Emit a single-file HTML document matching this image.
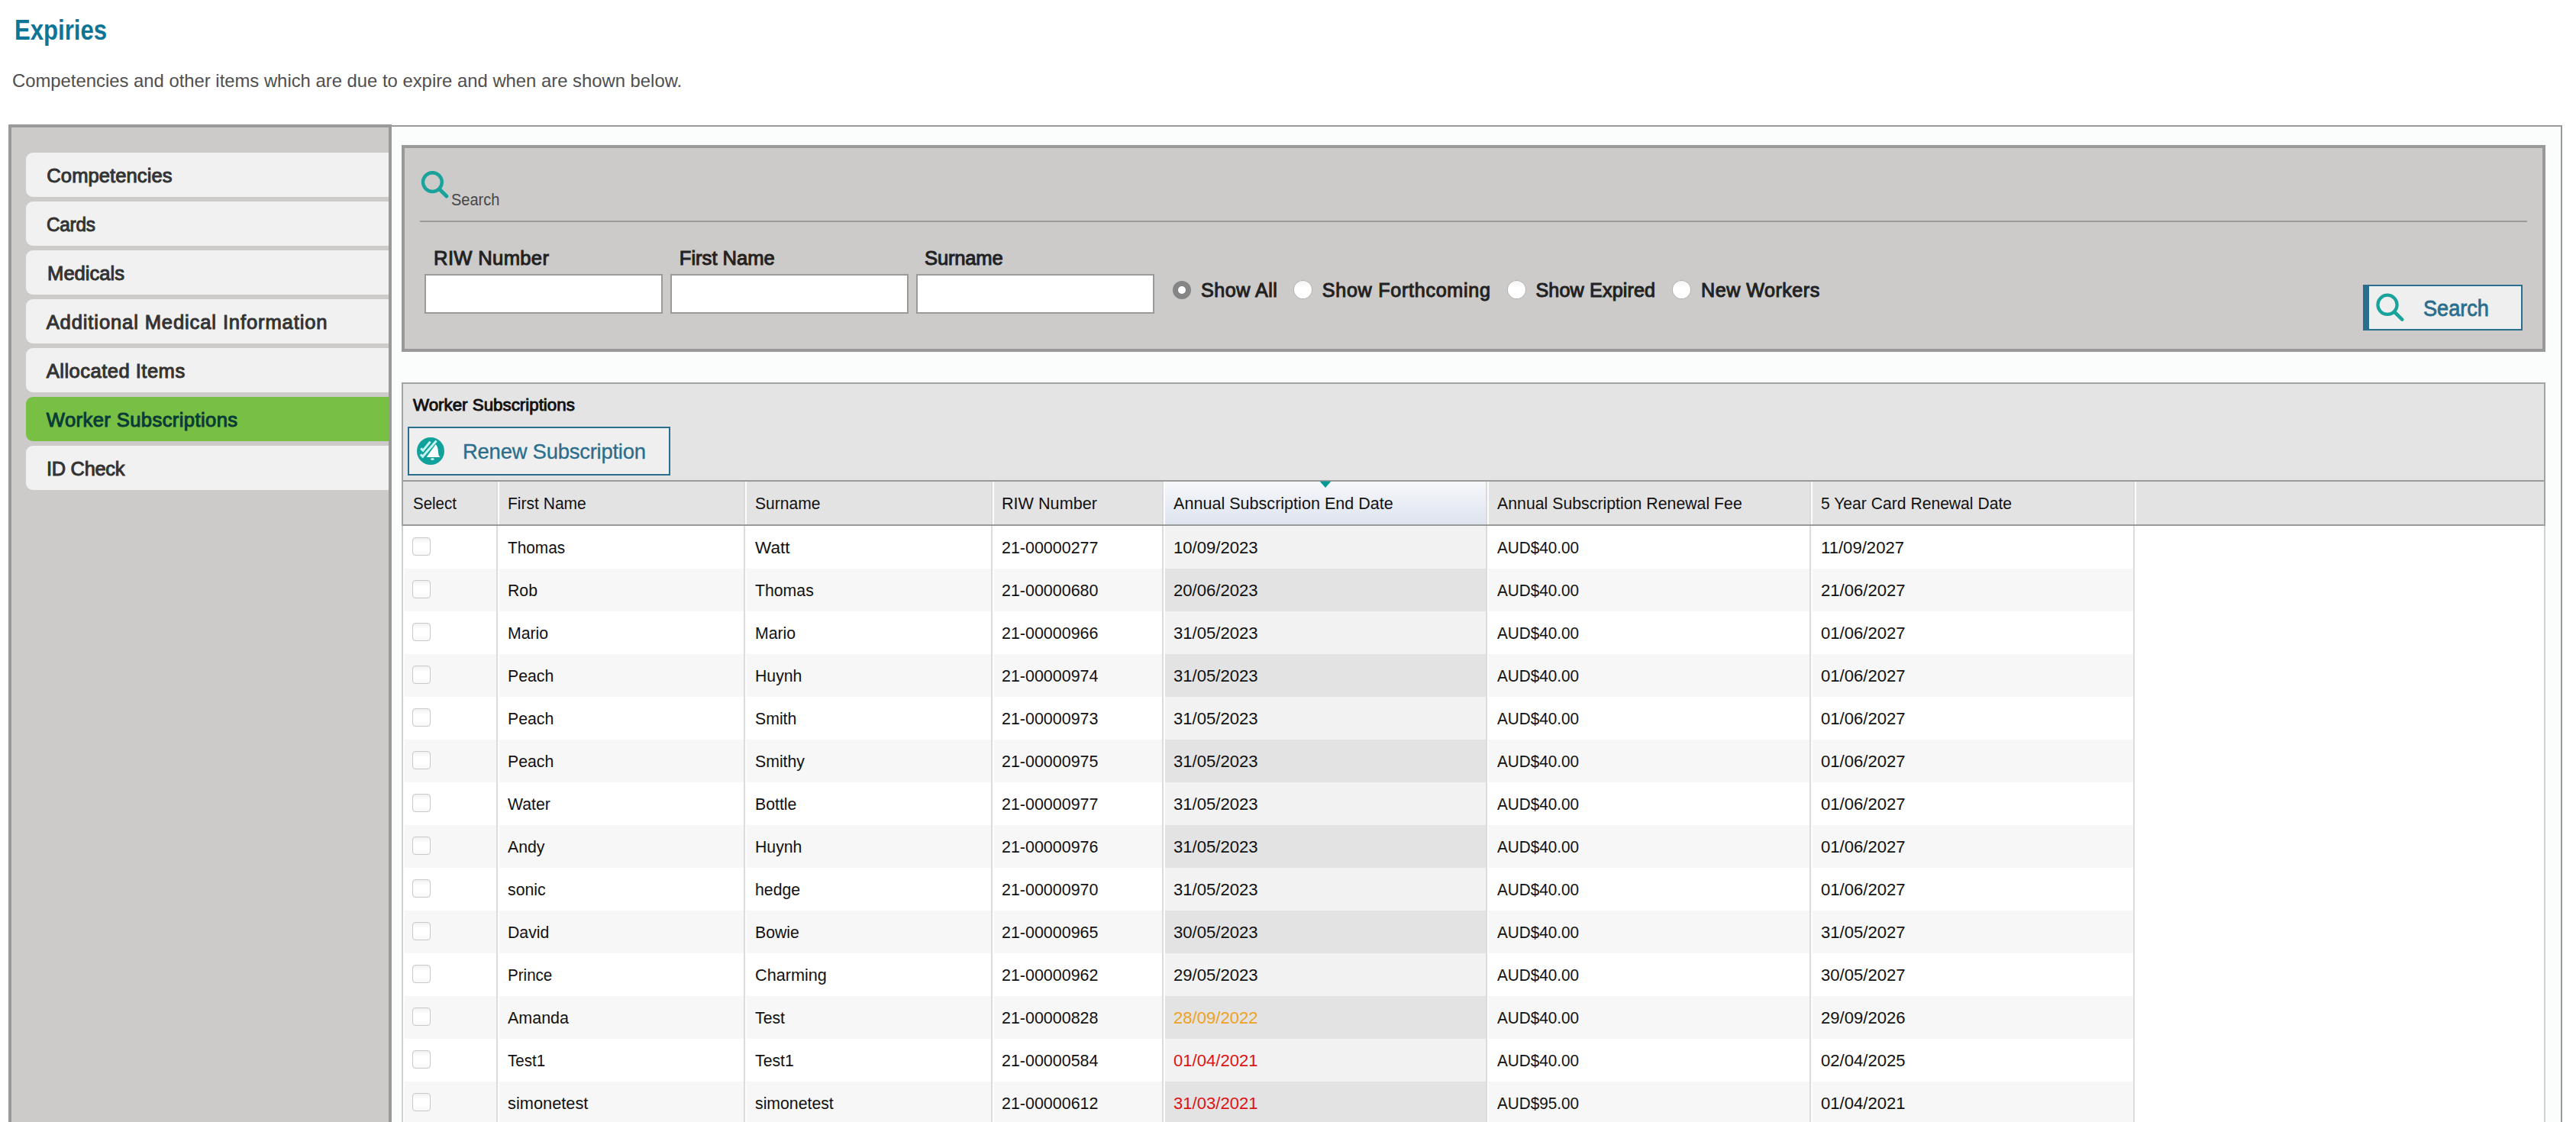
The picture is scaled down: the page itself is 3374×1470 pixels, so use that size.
<!DOCTYPE html>
<html><head><meta charset="utf-8"><title>Expiries</title>
<style>
html,body{margin:0;padding:0;}
body{width:3374px;height:1470px;overflow:hidden;position:relative;background:#fff;font-family:"Liberation Sans",sans-serif;}
.t{position:absolute;line-height:1;white-space:nowrap;}
.r{position:absolute;}
</style></head><body>
<div class="t" style="left:18.90px;top:22.22px;font-size:36px;color:#0f7597;font-weight:700;transform:scaleX(0.8648);transform-origin:0 0;">Expiries</div>
<div class="t" style="left:16.40px;top:94.82px;font-size:23.6px;color:#4f4f4f;font-weight:400;transform:scaleX(1.0103);transform-origin:0 0;">Competencies and other items which are due to expire and when are shown below.</div>
<div class="r" style="left:11px;top:163px;width:502px;height:1307px;background:#999;"></div>
<div class="r" style="left:15px;top:167px;width:494px;height:1303px;background:#cccbca;"></div>
<div class="r" style="left:34px;top:200px;width:475px;height:58px;background:#f1f1f1;border-radius:9px 0 0 9px;"></div>
<div class="t" style="left:61.30px;top:218.32px;font-size:25.6px;color:#333;font-weight:400;-webkit-text-stroke:1.0px #333;letter-spacing:0.056px;">Competencies</div>
<div class="r" style="left:34px;top:264px;width:475px;height:58px;background:#f1f1f1;border-radius:9px 0 0 9px;"></div>
<div class="t" style="left:61.20px;top:282.32px;font-size:25.6px;color:#333;font-weight:400;transform:scaleX(0.9502);transform-origin:0 0;-webkit-text-stroke:1.0px #333;letter-spacing:-0.250px;">Cards</div>
<div class="r" style="left:34px;top:328px;width:475px;height:58px;background:#f1f1f1;border-radius:9px 0 0 9px;"></div>
<div class="t" style="left:62.10px;top:346.32px;font-size:25.6px;color:#333;font-weight:400;-webkit-text-stroke:1.0px #333;letter-spacing:-0.013px;">Medicals</div>
<div class="r" style="left:34px;top:392px;width:475px;height:58px;background:#f1f1f1;border-radius:9px 0 0 9px;"></div>
<div class="t" style="left:60.70px;top:410.32px;font-size:25.6px;color:#333;font-weight:400;-webkit-text-stroke:1.0px #333;letter-spacing:0.862px;">Additional Medical Information</div>
<div class="r" style="left:34px;top:456px;width:475px;height:58px;background:#f1f1f1;border-radius:9px 0 0 9px;"></div>
<div class="t" style="left:60.80px;top:474.32px;font-size:25.6px;color:#333;font-weight:400;-webkit-text-stroke:1.0px #333;letter-spacing:0.459px;">Allocated Items</div>
<div class="r" style="left:34px;top:520px;width:475px;height:58px;background:#78c043;border-radius:9px 0 0 9px;"></div>
<div class="t" style="left:60.80px;top:538.32px;font-size:25.6px;color:#0a3b37;font-weight:400;-webkit-text-stroke:1.0px #0a3b37;letter-spacing:0.399px;">Worker Subscriptions</div>
<div class="r" style="left:34px;top:584px;width:475px;height:58px;background:#f1f1f1;border-radius:9px 0 0 9px;"></div>
<div class="t" style="left:60.60px;top:602.32px;font-size:25.6px;color:#333;font-weight:400;transform:scaleX(0.9894);transform-origin:0 0;-webkit-text-stroke:1.0px #333;letter-spacing:-0.250px;">ID Check</div>
<div class="r" style="left:513px;top:164px;width:2843px;height:1306px;background:#999;"></div>
<div class="r" style="left:513px;top:166px;width:2841px;height:1304px;background:#fbfcfc;"></div>
<div class="r" style="left:526px;top:190px;width:2808px;height:271px;background:#999;"></div>
<div class="r" style="left:530px;top:194px;width:2800px;height:263px;background:#cccbca;"></div>
<svg class="r" style="left:548px;top:220px" width="44" height="44" viewBox="0 0 44 44">
<circle cx="18.4" cy="18.6" r="12.4" fill="none" stroke="#19a39b" stroke-width="4.4"/>
<line x1="27.5" y1="27.8" x2="36.8" y2="37" stroke="#19a39b" stroke-width="5" stroke-linecap="round"/>
</svg>
<div class="t" style="left:590.50px;top:250.90px;font-size:22.2px;color:#474747;font-weight:400;transform:scaleX(0.9023);transform-origin:0 0;">Search</div>
<div class="r" style="left:550px;top:289px;width:2760px;height:2px;background:#9b9b9b;"></div>
<div class="t" style="left:568.10px;top:326.32px;font-size:25.6px;color:#222;font-weight:400;-webkit-text-stroke:1.0px #222;letter-spacing:0.326px;">RIW Number</div>
<div class="r" style="left:556px;top:359px;width:312px;height:52px;background:#9a9a9a;"></div>
<div class="r" style="left:558px;top:361px;width:308px;height:48px;background:#fff;"></div>
<div class="t" style="left:889.80px;top:326.32px;font-size:25.6px;color:#222;font-weight:400;-webkit-text-stroke:1.0px #222;letter-spacing:-0.009px;">First Name</div>
<div class="r" style="left:878px;top:359px;width:312px;height:52px;background:#9a9a9a;"></div>
<div class="r" style="left:880px;top:361px;width:308px;height:48px;background:#fff;"></div>
<div class="t" style="left:1211.00px;top:326.32px;font-size:25.6px;color:#222;font-weight:400;-webkit-text-stroke:1.0px #222;letter-spacing:-0.189px;">Surname</div>
<div class="r" style="left:1200px;top:359px;width:312px;height:52px;background:#9a9a9a;"></div>
<div class="r" style="left:1202px;top:361px;width:308px;height:48px;background:#fff;"></div>
<div class="r" style="left:1536px;top:368px;width:24px;height:24px;border-radius:50%;background:#858585;"></div>
<div class="r" style="left:1543px;top:375px;width:10px;height:10px;border-radius:50%;background:#fff;"></div>
<div class="t" style="left:1572.90px;top:367.66px;font-size:25.2px;color:#222;font-weight:400;-webkit-text-stroke:1.0px #222;letter-spacing:0.480px;">Show All</div>
<div class="r" style="left:1695px;top:368px;width:23px;height:23px;border-radius:50%;background:linear-gradient(#f4f4f4,#ffffff 40%);box-shadow:0 0 0 0.8px rgba(0,0,0,0.14);"></div>
<div class="t" style="left:1731.70px;top:367.66px;font-size:25.2px;color:#222;font-weight:400;-webkit-text-stroke:1.0px #222;letter-spacing:0.691px;">Show Forthcoming</div>
<div class="r" style="left:1975px;top:368px;width:23px;height:23px;border-radius:50%;background:linear-gradient(#f4f4f4,#ffffff 40%);box-shadow:0 0 0 0.8px rgba(0,0,0,0.14);"></div>
<div class="t" style="left:2011.40px;top:367.66px;font-size:25.2px;color:#222;font-weight:400;-webkit-text-stroke:1.0px #222;letter-spacing:0.120px;">Show Expired</div>
<div class="r" style="left:2191px;top:368px;width:23px;height:23px;border-radius:50%;background:linear-gradient(#f4f4f4,#ffffff 40%);box-shadow:0 0 0 0.8px rgba(0,0,0,0.14);"></div>
<div class="t" style="left:2228.10px;top:367.66px;font-size:25.2px;color:#222;font-weight:400;-webkit-text-stroke:1.0px #222;letter-spacing:0.448px;">New Workers</div>
<div class="r" style="left:3095px;top:373px;width:209px;height:60px;background:#2a6d8c;"></div>
<div class="r" style="left:3103px;top:375px;width:199px;height:56px;background:#e6f4f8;"></div>
<div class="r" style="left:3104px;top:376px;width:197px;height:54px;background:#efefef;"></div>
<svg class="r" style="left:3108px;top:380px" width="44" height="44" viewBox="0 0 44 44">
<circle cx="19" cy="19.3" r="12.6" fill="none" stroke="#19a39b" stroke-width="4.2"/>
<line x1="28" y1="28.5" x2="38.3" y2="38.6" stroke="#19a39b" stroke-width="4.6" stroke-linecap="round"/>
</svg>
<div class="t" style="left:3173.60px;top:389.22px;font-size:29.5px;color:#2a6d8c;font-weight:400;transform:scaleX(0.9196);transform-origin:0 0;-webkit-text-stroke:0.8px #2a6d8c;">Search</div>
<div class="r" style="left:526px;top:501px;width:2808px;height:969px;background:#a3a3a3;"></div>
<div class="r" style="left:528px;top:503px;width:2804px;height:967px;background:#e4e4e4;"></div>
<div class="t" style="left:540.75px;top:521.40px;font-size:21.5px;color:#111;font-weight:400;transform:scaleX(1.0386);transform-origin:0 0;-webkit-text-stroke:0.9px #111;">Worker Subscriptions</div>
<div class="r" style="left:534px;top:559px;width:344px;height:64px;background:#2a6d8c;"></div>
<div class="r" style="left:536px;top:561px;width:340px;height:60px;background:#efefef;"></div>
<svg class="r" style="left:546px;top:573px" width="36" height="36" viewBox="0 0 36 36">
<circle cx="18" cy="18" r="18" fill="#10a19b"/>
<polyline points="5.2,14.4 8,17.2 17.6,5.6" fill="none" stroke="#c4f2f2" stroke-width="3"/>
<polyline points="4.8,22.2 7.6,25.2 25.6,4.4" fill="none" stroke="#c4f2f2" stroke-width="3"/>
<path d="M24.6,9.2 C27.4,11.8 27.8,16 28,19.5 C28.2,22.6 29,24.6 30.4,26 L12.6,26 Z" fill="#ffffff"/>
<ellipse cx="20.4" cy="28.6" rx="2.4" ry="1.5" fill="#c4f2f2"/>
</svg>
<div class="t" style="left:605.75px;top:578.33px;font-size:27.6px;color:#2a6d8c;font-weight:400;transform:scaleX(0.9952);transform-origin:0 0;-webkit-text-stroke:0.3px #2a6d8c;letter-spacing:-0.250px;">Renew Subscription</div>
<div class="r" style="left:528px;top:629px;width:2804px;height:2px;background:#9a9a9a;"></div>
<div class="r" style="left:528px;top:631px;width:2804px;height:56px;background:#e3e3e3;"></div>
<div class="r" style="left:528px;top:687px;width:2804px;height:2px;background:#9a9a9a;"></div>
<div class="r" style="left:1524px;top:631px;width:422px;height:56px;background:linear-gradient(#f7f8fb,#dde3ef);"></div>
<div class="r" style="left:650px;top:631px;width:2px;height:56px;background:#dadada;"></div>
<div class="r" style="left:652px;top:631px;width:2px;height:56px;background:#fcfcfc;"></div>
<div class="r" style="left:974px;top:631px;width:2px;height:56px;background:#dadada;"></div>
<div class="r" style="left:976px;top:631px;width:2px;height:56px;background:#fcfcfc;"></div>
<div class="r" style="left:1298px;top:631px;width:2px;height:56px;background:#dadada;"></div>
<div class="r" style="left:1300px;top:631px;width:2px;height:56px;background:#fcfcfc;"></div>
<div class="r" style="left:1522px;top:631px;width:2px;height:56px;background:#dadada;"></div>
<div class="r" style="left:1524px;top:631px;width:2px;height:56px;background:#fcfcfc;"></div>
<div class="r" style="left:1946px;top:631px;width:2px;height:56px;background:#dadada;"></div>
<div class="r" style="left:1948px;top:631px;width:2px;height:56px;background:#fcfcfc;"></div>
<div class="r" style="left:2370px;top:631px;width:2px;height:56px;background:#dadada;"></div>
<div class="r" style="left:2372px;top:631px;width:2px;height:56px;background:#fcfcfc;"></div>
<div class="r" style="left:2794px;top:631px;width:2px;height:56px;background:#dadada;"></div>
<div class="r" style="left:2796px;top:631px;width:2px;height:56px;background:#fcfcfc;"></div>
<svg class="r" style="left:1728px;top:630px" width="16" height="10" viewBox="0 0 16 10"><polygon points="0.5,0.5 15.5,0.5 8,9" fill="#079a94"/></svg>
<div class="t" style="left:540.60px;top:649.37px;font-size:22px;color:#111;font-weight:400;transform:scaleX(0.9303);transform-origin:0 0;">Select</div>
<div class="t" style="left:665.40px;top:649.37px;font-size:22px;color:#111;font-weight:400;transform:scaleX(0.9556);transform-origin:0 0;">First Name</div>
<div class="t" style="left:988.50px;top:649.37px;font-size:22px;color:#111;font-weight:400;transform:scaleX(0.9572);transform-origin:0 0;">Surname</div>
<div class="t" style="left:1312.40px;top:649.37px;font-size:22px;color:#111;font-weight:400;transform:scaleX(0.9822);transform-origin:0 0;">RIW Number</div>
<div class="t" style="left:1536.50px;top:649.37px;font-size:22px;color:#111;font-weight:400;transform:scaleX(0.9806);transform-origin:0 0;">Annual Subscription End Date</div>
<div class="t" style="left:1960.60px;top:649.37px;font-size:22px;color:#111;font-weight:400;transform:scaleX(0.9679);transform-origin:0 0;">Annual Subscription Renewal Fee</div>
<div class="t" style="left:2384.50px;top:649.37px;font-size:22px;color:#111;font-weight:400;transform:scaleX(0.9598);transform-origin:0 0;">5 Year Card Renewal Date</div>
<div class="r" style="left:528px;top:689px;width:2804px;height:781px;background:#ffffff;"></div>
<div class="r" style="left:526px;top:689px;width:2px;height:781px;background:#cfcfcf;"></div>
<div class="r" style="left:3332px;top:689px;width:2px;height:781px;background:#d2d2d2;"></div>
<div class="r" style="left:1524px;top:689px;width:422px;height:56px;background:#f2f2f2;"></div>
<div class="r" style="left:530px;top:745px;width:2264px;height:56px;background:#f7f7f7;"></div>
<div class="r" style="left:1524px;top:745px;width:422px;height:56px;background:#e3e3e3;"></div>
<div class="r" style="left:1524px;top:801px;width:422px;height:56px;background:#f2f2f2;"></div>
<div class="r" style="left:530px;top:857px;width:2264px;height:56px;background:#f7f7f7;"></div>
<div class="r" style="left:1524px;top:857px;width:422px;height:56px;background:#e3e3e3;"></div>
<div class="r" style="left:1524px;top:913px;width:422px;height:56px;background:#f2f2f2;"></div>
<div class="r" style="left:530px;top:969px;width:2264px;height:56px;background:#f7f7f7;"></div>
<div class="r" style="left:1524px;top:969px;width:422px;height:56px;background:#e3e3e3;"></div>
<div class="r" style="left:1524px;top:1025px;width:422px;height:56px;background:#f2f2f2;"></div>
<div class="r" style="left:530px;top:1081px;width:2264px;height:56px;background:#f7f7f7;"></div>
<div class="r" style="left:1524px;top:1081px;width:422px;height:56px;background:#e3e3e3;"></div>
<div class="r" style="left:1524px;top:1137px;width:422px;height:56px;background:#f2f2f2;"></div>
<div class="r" style="left:530px;top:1193px;width:2264px;height:56px;background:#f7f7f7;"></div>
<div class="r" style="left:1524px;top:1193px;width:422px;height:56px;background:#e3e3e3;"></div>
<div class="r" style="left:1524px;top:1249px;width:422px;height:56px;background:#f2f2f2;"></div>
<div class="r" style="left:530px;top:1305px;width:2264px;height:56px;background:#f7f7f7;"></div>
<div class="r" style="left:1524px;top:1305px;width:422px;height:56px;background:#e3e3e3;"></div>
<div class="r" style="left:1524px;top:1361px;width:422px;height:56px;background:#f2f2f2;"></div>
<div class="r" style="left:530px;top:1417px;width:2264px;height:56px;background:#f7f7f7;"></div>
<div class="r" style="left:1524px;top:1417px;width:422px;height:56px;background:#e3e3e3;"></div>
<div class="r" style="left:650px;top:689px;width:2px;height:781px;background:#dcdcdc;"></div>
<div class="r" style="left:652px;top:689px;width:2px;height:781px;background:#fdfdfd;"></div>
<div class="r" style="left:974px;top:689px;width:2px;height:781px;background:#dcdcdc;"></div>
<div class="r" style="left:976px;top:689px;width:2px;height:781px;background:#fdfdfd;"></div>
<div class="r" style="left:1298px;top:689px;width:2px;height:781px;background:#dcdcdc;"></div>
<div class="r" style="left:1300px;top:689px;width:2px;height:781px;background:#fdfdfd;"></div>
<div class="r" style="left:1522px;top:689px;width:2px;height:781px;background:#dcdcdc;"></div>
<div class="r" style="left:1524px;top:689px;width:2px;height:781px;background:#fdfdfd;"></div>
<div class="r" style="left:1946px;top:689px;width:2px;height:781px;background:#dcdcdc;"></div>
<div class="r" style="left:1948px;top:689px;width:2px;height:781px;background:#fdfdfd;"></div>
<div class="r" style="left:2370px;top:689px;width:2px;height:781px;background:#dcdcdc;"></div>
<div class="r" style="left:2372px;top:689px;width:2px;height:781px;background:#fdfdfd;"></div>
<div class="r" style="left:2794px;top:689px;width:2px;height:781px;background:#dcdcdc;"></div>
<div class="r" style="left:2796px;top:689px;width:2px;height:781px;background:#fdfdfd;"></div>
<div class="r" style="left:540px;top:704px;width:22px;height:22px;border:1px solid #c9c9c9;border-radius:4px;background:linear-gradient(#f1f1f1,#ffffff 35%,#ffffff 70%,#f6f6f6);"></div>
<div class="t" style="left:664.60px;top:707.37px;font-size:22px;color:#111;font-weight:400;transform:scaleX(0.9456);transform-origin:0 0;">Thomas</div>
<div class="t" style="left:988.50px;top:707.37px;font-size:22px;color:#111;font-weight:400;transform:scaleX(1.0239);transform-origin:0 0;">Watt</div>
<div class="t" style="left:1312.40px;top:707.37px;font-size:22px;color:#111;font-weight:400;transform:scaleX(0.9750);transform-origin:0 0;">21-00000277</div>
<div class="t" style="left:1536.90px;top:707.37px;font-size:22px;color:#111;font-weight:400;transform:scaleX(1.0050);transform-origin:0 0;">10/09/2023</div>
<div class="t" style="left:1960.60px;top:707.37px;font-size:22px;color:#111;font-weight:400;transform:scaleX(0.9420);transform-origin:0 0;">AUD$40.00</div>
<div class="t" style="left:2384.50px;top:707.37px;font-size:22px;color:#111;font-weight:400;transform:scaleX(1.0050);transform-origin:0 0;">11/09/2027</div>
<div class="r" style="left:540px;top:760px;width:22px;height:22px;border:1px solid #c9c9c9;border-radius:4px;background:linear-gradient(#f1f1f1,#ffffff 35%,#ffffff 70%,#f6f6f6);"></div>
<div class="t" style="left:664.60px;top:763.37px;font-size:22px;color:#111;font-weight:400;transform:scaleX(0.9660);transform-origin:0 0;">Rob</div>
<div class="t" style="left:988.50px;top:763.37px;font-size:22px;color:#111;font-weight:400;transform:scaleX(0.9660);transform-origin:0 0;">Thomas</div>
<div class="t" style="left:1312.40px;top:763.37px;font-size:22px;color:#111;font-weight:400;transform:scaleX(0.9750);transform-origin:0 0;">21-00000680</div>
<div class="t" style="left:1536.90px;top:763.37px;font-size:22px;color:#111;font-weight:400;transform:scaleX(1.0050);transform-origin:0 0;">20/06/2023</div>
<div class="t" style="left:1960.60px;top:763.37px;font-size:22px;color:#111;font-weight:400;transform:scaleX(0.9420);transform-origin:0 0;">AUD$40.00</div>
<div class="t" style="left:2384.50px;top:763.37px;font-size:22px;color:#111;font-weight:400;transform:scaleX(1.0050);transform-origin:0 0;">21/06/2027</div>
<div class="r" style="left:540px;top:816px;width:22px;height:22px;border:1px solid #c9c9c9;border-radius:4px;background:linear-gradient(#f1f1f1,#ffffff 35%,#ffffff 70%,#f6f6f6);"></div>
<div class="t" style="left:664.60px;top:819.37px;font-size:22px;color:#111;font-weight:400;transform:scaleX(0.9660);transform-origin:0 0;">Mario</div>
<div class="t" style="left:988.50px;top:819.37px;font-size:22px;color:#111;font-weight:400;transform:scaleX(0.9660);transform-origin:0 0;">Mario</div>
<div class="t" style="left:1312.40px;top:819.37px;font-size:22px;color:#111;font-weight:400;transform:scaleX(0.9750);transform-origin:0 0;">21-00000966</div>
<div class="t" style="left:1536.90px;top:819.37px;font-size:22px;color:#111;font-weight:400;transform:scaleX(1.0050);transform-origin:0 0;">31/05/2023</div>
<div class="t" style="left:1960.60px;top:819.37px;font-size:22px;color:#111;font-weight:400;transform:scaleX(0.9420);transform-origin:0 0;">AUD$40.00</div>
<div class="t" style="left:2384.50px;top:819.37px;font-size:22px;color:#111;font-weight:400;transform:scaleX(1.0050);transform-origin:0 0;">01/06/2027</div>
<div class="r" style="left:540px;top:872px;width:22px;height:22px;border:1px solid #c9c9c9;border-radius:4px;background:linear-gradient(#f1f1f1,#ffffff 35%,#ffffff 70%,#f6f6f6);"></div>
<div class="t" style="left:664.60px;top:875.37px;font-size:22px;color:#111;font-weight:400;transform:scaleX(0.9660);transform-origin:0 0;">Peach</div>
<div class="t" style="left:988.50px;top:875.37px;font-size:22px;color:#111;font-weight:400;transform:scaleX(0.9660);transform-origin:0 0;">Huynh</div>
<div class="t" style="left:1312.40px;top:875.37px;font-size:22px;color:#111;font-weight:400;transform:scaleX(0.9750);transform-origin:0 0;">21-00000974</div>
<div class="t" style="left:1536.90px;top:875.37px;font-size:22px;color:#111;font-weight:400;transform:scaleX(1.0050);transform-origin:0 0;">31/05/2023</div>
<div class="t" style="left:1960.60px;top:875.37px;font-size:22px;color:#111;font-weight:400;transform:scaleX(0.9420);transform-origin:0 0;">AUD$40.00</div>
<div class="t" style="left:2384.50px;top:875.37px;font-size:22px;color:#111;font-weight:400;transform:scaleX(1.0050);transform-origin:0 0;">01/06/2027</div>
<div class="r" style="left:540px;top:928px;width:22px;height:22px;border:1px solid #c9c9c9;border-radius:4px;background:linear-gradient(#f1f1f1,#ffffff 35%,#ffffff 70%,#f6f6f6);"></div>
<div class="t" style="left:664.60px;top:931.37px;font-size:22px;color:#111;font-weight:400;transform:scaleX(0.9660);transform-origin:0 0;">Peach</div>
<div class="t" style="left:988.50px;top:931.37px;font-size:22px;color:#111;font-weight:400;transform:scaleX(0.9660);transform-origin:0 0;">Smith</div>
<div class="t" style="left:1312.40px;top:931.37px;font-size:22px;color:#111;font-weight:400;transform:scaleX(0.9750);transform-origin:0 0;">21-00000973</div>
<div class="t" style="left:1536.90px;top:931.37px;font-size:22px;color:#111;font-weight:400;transform:scaleX(1.0050);transform-origin:0 0;">31/05/2023</div>
<div class="t" style="left:1960.60px;top:931.37px;font-size:22px;color:#111;font-weight:400;transform:scaleX(0.9420);transform-origin:0 0;">AUD$40.00</div>
<div class="t" style="left:2384.50px;top:931.37px;font-size:22px;color:#111;font-weight:400;transform:scaleX(1.0050);transform-origin:0 0;">01/06/2027</div>
<div class="r" style="left:540px;top:984px;width:22px;height:22px;border:1px solid #c9c9c9;border-radius:4px;background:linear-gradient(#f1f1f1,#ffffff 35%,#ffffff 70%,#f6f6f6);"></div>
<div class="t" style="left:664.60px;top:987.37px;font-size:22px;color:#111;font-weight:400;transform:scaleX(0.9660);transform-origin:0 0;">Peach</div>
<div class="t" style="left:988.50px;top:987.37px;font-size:22px;color:#111;font-weight:400;transform:scaleX(0.9660);transform-origin:0 0;">Smithy</div>
<div class="t" style="left:1312.40px;top:987.37px;font-size:22px;color:#111;font-weight:400;transform:scaleX(0.9750);transform-origin:0 0;">21-00000975</div>
<div class="t" style="left:1536.90px;top:987.37px;font-size:22px;color:#111;font-weight:400;transform:scaleX(1.0050);transform-origin:0 0;">31/05/2023</div>
<div class="t" style="left:1960.60px;top:987.37px;font-size:22px;color:#111;font-weight:400;transform:scaleX(0.9420);transform-origin:0 0;">AUD$40.00</div>
<div class="t" style="left:2384.50px;top:987.37px;font-size:22px;color:#111;font-weight:400;transform:scaleX(1.0050);transform-origin:0 0;">01/06/2027</div>
<div class="r" style="left:540px;top:1040px;width:22px;height:22px;border:1px solid #c9c9c9;border-radius:4px;background:linear-gradient(#f1f1f1,#ffffff 35%,#ffffff 70%,#f6f6f6);"></div>
<div class="t" style="left:664.60px;top:1043.37px;font-size:22px;color:#111;font-weight:400;transform:scaleX(0.9660);transform-origin:0 0;">Water</div>
<div class="t" style="left:988.50px;top:1043.37px;font-size:22px;color:#111;font-weight:400;transform:scaleX(0.9660);transform-origin:0 0;">Bottle</div>
<div class="t" style="left:1312.40px;top:1043.37px;font-size:22px;color:#111;font-weight:400;transform:scaleX(0.9750);transform-origin:0 0;">21-00000977</div>
<div class="t" style="left:1536.90px;top:1043.37px;font-size:22px;color:#111;font-weight:400;transform:scaleX(1.0050);transform-origin:0 0;">31/05/2023</div>
<div class="t" style="left:1960.60px;top:1043.37px;font-size:22px;color:#111;font-weight:400;transform:scaleX(0.9420);transform-origin:0 0;">AUD$40.00</div>
<div class="t" style="left:2384.50px;top:1043.37px;font-size:22px;color:#111;font-weight:400;transform:scaleX(1.0050);transform-origin:0 0;">01/06/2027</div>
<div class="r" style="left:540px;top:1096px;width:22px;height:22px;border:1px solid #c9c9c9;border-radius:4px;background:linear-gradient(#f1f1f1,#ffffff 35%,#ffffff 70%,#f6f6f6);"></div>
<div class="t" style="left:664.60px;top:1099.37px;font-size:22px;color:#111;font-weight:400;transform:scaleX(0.9660);transform-origin:0 0;">Andy</div>
<div class="t" style="left:988.50px;top:1099.37px;font-size:22px;color:#111;font-weight:400;transform:scaleX(0.9660);transform-origin:0 0;">Huynh</div>
<div class="t" style="left:1312.40px;top:1099.37px;font-size:22px;color:#111;font-weight:400;transform:scaleX(0.9750);transform-origin:0 0;">21-00000976</div>
<div class="t" style="left:1536.90px;top:1099.37px;font-size:22px;color:#111;font-weight:400;transform:scaleX(1.0050);transform-origin:0 0;">31/05/2023</div>
<div class="t" style="left:1960.60px;top:1099.37px;font-size:22px;color:#111;font-weight:400;transform:scaleX(0.9420);transform-origin:0 0;">AUD$40.00</div>
<div class="t" style="left:2384.50px;top:1099.37px;font-size:22px;color:#111;font-weight:400;transform:scaleX(1.0050);transform-origin:0 0;">01/06/2027</div>
<div class="r" style="left:540px;top:1152px;width:22px;height:22px;border:1px solid #c9c9c9;border-radius:4px;background:linear-gradient(#f1f1f1,#ffffff 35%,#ffffff 70%,#f6f6f6);"></div>
<div class="t" style="left:664.60px;top:1155.37px;font-size:22px;color:#111;font-weight:400;transform:scaleX(0.9660);transform-origin:0 0;">sonic</div>
<div class="t" style="left:988.50px;top:1155.37px;font-size:22px;color:#111;font-weight:400;transform:scaleX(0.9660);transform-origin:0 0;">hedge</div>
<div class="t" style="left:1312.40px;top:1155.37px;font-size:22px;color:#111;font-weight:400;transform:scaleX(0.9750);transform-origin:0 0;">21-00000970</div>
<div class="t" style="left:1536.90px;top:1155.37px;font-size:22px;color:#111;font-weight:400;transform:scaleX(1.0050);transform-origin:0 0;">31/05/2023</div>
<div class="t" style="left:1960.60px;top:1155.37px;font-size:22px;color:#111;font-weight:400;transform:scaleX(0.9420);transform-origin:0 0;">AUD$40.00</div>
<div class="t" style="left:2384.50px;top:1155.37px;font-size:22px;color:#111;font-weight:400;transform:scaleX(1.0050);transform-origin:0 0;">01/06/2027</div>
<div class="r" style="left:540px;top:1208px;width:22px;height:22px;border:1px solid #c9c9c9;border-radius:4px;background:linear-gradient(#f1f1f1,#ffffff 35%,#ffffff 70%,#f6f6f6);"></div>
<div class="t" style="left:664.60px;top:1211.37px;font-size:22px;color:#111;font-weight:400;transform:scaleX(0.9660);transform-origin:0 0;">David</div>
<div class="t" style="left:988.50px;top:1211.37px;font-size:22px;color:#111;font-weight:400;transform:scaleX(0.9660);transform-origin:0 0;">Bowie</div>
<div class="t" style="left:1312.40px;top:1211.37px;font-size:22px;color:#111;font-weight:400;transform:scaleX(0.9750);transform-origin:0 0;">21-00000965</div>
<div class="t" style="left:1536.90px;top:1211.37px;font-size:22px;color:#111;font-weight:400;transform:scaleX(1.0050);transform-origin:0 0;">30/05/2023</div>
<div class="t" style="left:1960.60px;top:1211.37px;font-size:22px;color:#111;font-weight:400;transform:scaleX(0.9420);transform-origin:0 0;">AUD$40.00</div>
<div class="t" style="left:2384.50px;top:1211.37px;font-size:22px;color:#111;font-weight:400;transform:scaleX(1.0050);transform-origin:0 0;">31/05/2027</div>
<div class="r" style="left:540px;top:1264px;width:22px;height:22px;border:1px solid #c9c9c9;border-radius:4px;background:linear-gradient(#f1f1f1,#ffffff 35%,#ffffff 70%,#f6f6f6);"></div>
<div class="t" style="left:664.60px;top:1267.37px;font-size:22px;color:#111;font-weight:400;transform:scaleX(0.9347);transform-origin:0 0;">Prince</div>
<div class="t" style="left:988.50px;top:1267.37px;font-size:22px;color:#111;font-weight:400;transform:scaleX(0.9846);transform-origin:0 0;">Charming</div>
<div class="t" style="left:1312.40px;top:1267.37px;font-size:22px;color:#111;font-weight:400;transform:scaleX(0.9750);transform-origin:0 0;">21-00000962</div>
<div class="t" style="left:1536.90px;top:1267.37px;font-size:22px;color:#111;font-weight:400;transform:scaleX(1.0050);transform-origin:0 0;">29/05/2023</div>
<div class="t" style="left:1960.60px;top:1267.37px;font-size:22px;color:#111;font-weight:400;transform:scaleX(0.9420);transform-origin:0 0;">AUD$40.00</div>
<div class="t" style="left:2384.50px;top:1267.37px;font-size:22px;color:#111;font-weight:400;transform:scaleX(1.0050);transform-origin:0 0;">30/05/2027</div>
<div class="r" style="left:540px;top:1320px;width:22px;height:22px;border:1px solid #c9c9c9;border-radius:4px;background:linear-gradient(#f1f1f1,#ffffff 35%,#ffffff 70%,#f6f6f6);"></div>
<div class="t" style="left:664.60px;top:1323.37px;font-size:22px;color:#111;font-weight:400;transform:scaleX(0.9761);transform-origin:0 0;">Amanda</div>
<div class="t" style="left:988.50px;top:1323.37px;font-size:22px;color:#111;font-weight:400;transform:scaleX(0.9661);transform-origin:0 0;">Test</div>
<div class="t" style="left:1312.40px;top:1323.37px;font-size:22px;color:#111;font-weight:400;transform:scaleX(0.9750);transform-origin:0 0;">21-00000828</div>
<div class="t" style="left:1536.90px;top:1323.37px;font-size:22px;color:#eea224;font-weight:400;transform:scaleX(1.0050);transform-origin:0 0;">28/09/2022</div>
<div class="t" style="left:1960.60px;top:1323.37px;font-size:22px;color:#111;font-weight:400;transform:scaleX(0.9420);transform-origin:0 0;">AUD$40.00</div>
<div class="t" style="left:2384.50px;top:1323.37px;font-size:22px;color:#111;font-weight:400;transform:scaleX(1.0050);transform-origin:0 0;">29/09/2026</div>
<div class="r" style="left:540px;top:1376px;width:22px;height:22px;border:1px solid #c9c9c9;border-radius:4px;background:linear-gradient(#f1f1f1,#ffffff 35%,#ffffff 70%,#f6f6f6);"></div>
<div class="t" style="left:664.60px;top:1379.37px;font-size:22px;color:#111;font-weight:400;transform:scaleX(0.9338);transform-origin:0 0;">Test1</div>
<div class="t" style="left:988.50px;top:1379.37px;font-size:22px;color:#111;font-weight:400;transform:scaleX(0.9660);transform-origin:0 0;">Test1</div>
<div class="t" style="left:1312.40px;top:1379.37px;font-size:22px;color:#111;font-weight:400;transform:scaleX(0.9750);transform-origin:0 0;">21-00000584</div>
<div class="t" style="left:1536.90px;top:1379.37px;font-size:22px;color:#de1414;font-weight:400;transform:scaleX(1.0050);transform-origin:0 0;">01/04/2021</div>
<div class="t" style="left:1960.60px;top:1379.37px;font-size:22px;color:#111;font-weight:400;transform:scaleX(0.9420);transform-origin:0 0;">AUD$40.00</div>
<div class="t" style="left:2384.50px;top:1379.37px;font-size:22px;color:#111;font-weight:400;transform:scaleX(1.0050);transform-origin:0 0;">02/04/2025</div>
<div class="r" style="left:540px;top:1432px;width:22px;height:22px;border:1px solid #c9c9c9;border-radius:4px;background:linear-gradient(#f1f1f1,#ffffff 35%,#ffffff 70%,#f6f6f6);"></div>
<div class="t" style="left:664.60px;top:1435.37px;font-size:22px;color:#111;font-weight:400;transform:scaleX(0.9909);transform-origin:0 0;">simonetest</div>
<div class="t" style="left:988.50px;top:1435.37px;font-size:22px;color:#111;font-weight:400;transform:scaleX(0.9660);transform-origin:0 0;">simonetest</div>
<div class="t" style="left:1312.40px;top:1435.37px;font-size:22px;color:#111;font-weight:400;transform:scaleX(0.9750);transform-origin:0 0;">21-00000612</div>
<div class="t" style="left:1536.90px;top:1435.37px;font-size:22px;color:#de1414;font-weight:400;transform:scaleX(1.0050);transform-origin:0 0;">31/03/2021</div>
<div class="t" style="left:1960.60px;top:1435.37px;font-size:22px;color:#111;font-weight:400;transform:scaleX(0.9420);transform-origin:0 0;">AUD$95.00</div>
<div class="t" style="left:2384.50px;top:1435.37px;font-size:22px;color:#111;font-weight:400;transform:scaleX(1.0050);transform-origin:0 0;">01/04/2021</div>
</body></html>
